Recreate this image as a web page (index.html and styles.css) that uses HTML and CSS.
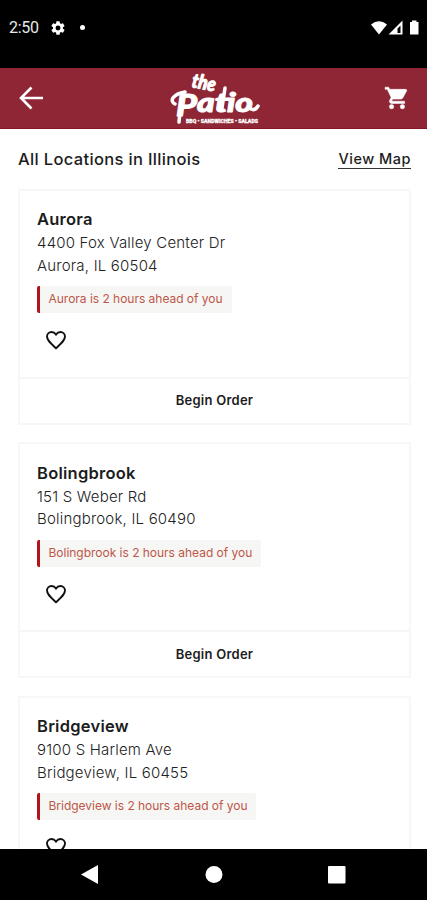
FILE: index.html
```html
<!DOCTYPE html>
<html lang="en">
<head>
<meta charset="utf-8">
<title>The Patio - Locations</title>
<link rel="stylesheet" href="styles.css">
</head>
<body>
<div class="status">
  <span class="clock">2:50</span>
  <svg class="gear" width="16" height="16" viewBox="0 0 24 24"><path fill="#fff" fill-rule="evenodd" d="M19.4 13a7.500 7.500 0 0 0 0-2l2.100-1.650a.5.5 0 0 0 .12-.64l-2-3.460a.5.5 0 0 0-.61-.22l-2.490 1a7.300 7.300 0 0 0-1.690-.98l-.38-2.650A.5.5 0 0 0 14 2h-4a.5.5 0 0 0-.49.42l-.38 2.650a7.700 7.700 0 0 0-1.690.98l-2.490-1a.5.5 0 0 0-.61.220l-2 3.460a.5.5 0 0 0 .12.640L4.570 11a7.900 7.900 0 0 0 0 2l-2.110 1.650a.5.5 0 0 0-.12.640l2 3.460c.12.220.39.300.61.220l2.490-1c.52.400 1.080.730 1.690.980l.38 2.650c.03.240.24.420.49.420h4c.25 0 .46-.18.49-.42l.38-2.650a7.700 7.700 0 0 0 1.690-.98l2.490 1c.23.090.49 0 .61-.22l2-3.460a.5.500 0 0 0-.12-.64zM12 8.300a3.700 3.700 0 1 1 0 7.400 3.700 3.700 0 0 1 0-7.400z"/></svg>
  <span class="dot"></span>
  <svg class="signals" width="50" height="16" viewBox="0 0 50 16"><g fill="#fff"><path d="M1 4.500Q9 -2 17 4.500L9 14.500z"/><path fill-rule="evenodd" d="M18.500 14.500L32.500 .5v14zM27.500 8.500v4.500h3V5.500z"/><path d="M40 2h2V.5h4.500V2h2v12.500H40z"/></g></svg>
</div>
<header class="bar">
  <svg class="back" width="26" height="24" viewBox="0 0 26 24"><path d="M26 12H4M14.500 1.500L4 12l10.500 10.500" fill="none" stroke="#fff" stroke-width="2.600"/></svg>
  <svg class="logo" width="96" height="60" viewBox="0 0 96 60">
    <g fill="#fff" stroke="#fff" stroke-linejoin="round">
      <text class="script" transform="translate(24 19) rotate(11)" font-size="20" stroke-width="1" textLength="24" lengthAdjust="spacingAndGlyphs">the</text>
      <text class="script" transform="translate(9 48)" font-size="31" stroke-width="1" textLength="21" lengthAdjust="spacingAndGlyphs">P</text>
      <text class="script" transform="translate(30 44)" font-size="27" stroke-width="1" textLength="56" lengthAdjust="spacingAndGlyphs">atio</text>
      <path d="M8 36C2 33 6 26 18 24M13 44L12 54M58 20L55 40M84 41Q88 43 91 38" fill="none" stroke-width="3.500" stroke-linecap="round"/>
    </g>
    <text class="tag" x="19" y="55" textLength="72" lengthAdjust="spacingAndGlyphs">BBQ • SANDWICHES • SALADS</text>
  </svg>
  <svg class="cart" width="26" height="26" viewBox="0 0 24 24"><path fill="#fff" d="M7 18a2 2 0 1 0 0 4 2 2 0 0 0 0-4zM1 2v2h2l3.600 7.590-1.350 2.450C4.520 15.370 5.480 17 7 17h12v-2H7.420a.25.25 0 0 1-.22-.37L8.100 13h7.450c.75 0 1.410-.41 1.750-1.030l3.580-6.490A1 1 0 0 0 20 4H5.210l-.94-2zm16 16a2 2 0 1 0 0 4 2 2 0 0 0 0-4z"/></svg>
</header>
<main>
  <div class="heading"><h1>All Locations in Illinois</h1><a class="map">View Map</a></div>
  <section class="card">
    <div class="info"><h2>Aurora</h2><p>4400 Fox Valley Center Dr</p><p>Aurora, IL 60504</p>
    <div class="note">Aurora is 2 hours ahead of you</div>
    <svg class="heart" width="24" height="24" viewBox="0 0 24 24"><path d="M12 20.300l-1.200-1.100C6 14.800 3 12.100 3 8.600 3 6 5 4 7.500 4c1.700 0 3.400.9 4.500 2.500C13.100 4.900 14.800 4 16.500 4 19 4 21 6 21 8.600c0 3.500-3 6.200-7.800 10.600z"/></svg></div>
    <div class="order">Begin Order</div>
  </section>
  <section class="card">
    <div class="info"><h2>Bolingbrook</h2><p>151 S Weber Rd</p><p>Bolingbrook, IL 60490</p>
    <div class="note n2">Bolingbrook is 2 hours ahead of you</div>
    <svg class="heart" width="24" height="24" viewBox="0 0 24 24"><path d="M12 20.300l-1.200-1.100C6 14.800 3 12.100 3 8.600 3 6 5 4 7.500 4c1.700 0 3.400.9 4.500 2.500C13.100 4.900 14.800 4 16.500 4 19 4 21 6 21 8.600c0 3.500-3 6.200-7.800 10.600z"/></svg></div>
    <div class="order">Begin Order</div>
  </section>
  <section class="card">
    <div class="info"><h2>Bridgeview</h2><p>9100 S Harlem Ave</p><p>Bridgeview, IL 60455</p>
    <div class="note n3">Bridgeview is 2 hours ahead of you</div>
    <svg class="heart" width="24" height="24" viewBox="0 0 24 24"><path d="M12 20.300l-1.200-1.100C6 14.800 3 12.100 3 8.600 3 6 5 4 7.500 4c1.700 0 3.400.9 4.500 2.500C13.100 4.900 14.800 4 16.500 4 19 4 21 6 21 8.600c0 3.500-3 6.200-7.800 10.600z"/></svg></div>
  </section>
</main>
<nav><svg width="427" height="51" viewBox="0 0 427 51"><g fill="#fff"><path d="M81 25.500L98 16v19z"/><circle cx="214" cy="25.500" r="8.500"/><rect x="328" y="17" width="17.500" height="17.500" rx="1"/></g></svg></nav>
</body>
</html>
```
FILE: styles.css
```css
* { box-sizing: border-box; }
body {
  margin: 0;
  height: 900px;
  overflow: hidden;
  display: flex;
  flex-direction: column;
  background: #fff;
  color: #1c1c1c;
  font-family: Inter, sans-serif;
}
h1, h2, p { margin: 0; }
svg { display: block; flex: none; overflow: visible; }
.status {
  height: 68px;
  flex: none;
  background: #000;
  color: #e8e8e8;
  display: flex;
  align-items: center;
  padding: 0 7px 13px 9px;
}
.clock { font: 400 16px Roboto, sans-serif; width: 41px; letter-spacing: -0.3px; }
.dot { width: 5px; height: 5px; border-radius: 50%; background: #fff; margin-left: 14px; }
.signals { margin-left: auto; }
.bar {
  height: 61px;
  flex: none;
  background: #8e2636;
  border-bottom: 1px solid #841525;
  display: flex;
  align-items: center;
  justify-content: space-between;
  padding: 0 17px;
}
.logo { margin-left: 3px; }
.cart path { stroke: #fff; stroke-width: 0.5px; }
.script { font-family: Lato, sans-serif; font-weight: 900; font-style: italic; }
.tag { font: 900 6px Roboto, sans-serif; fill: #fff; stroke: #fff; stroke-width: 0.3px; }
main { flex: 1; min-height: 0; overflow: hidden; padding: 0 16px 0 18px; }
.heading {
  height: 59.600px;
  display: flex;
  justify-content: space-between;
  align-items: center;
}
h1 { font-size: 16.500px; font-weight: 500; line-height: 20px; letter-spacing: 0.34px; margin-top: -0.600px; }
.map { font-size: 14.500px; font-weight: 500; line-height: 18px; letter-spacing: 0.5px; border-bottom: 1px solid #333; margin-top: 1px; }
.card {
  height: 236px;
  margin-bottom: 17.500px;
  border: 2px solid #f7f7f7;
  display: flex;
  flex-direction: column;
}
.info { height: 188px; padding: 16.900px 17px 0; flex: none; border-bottom: 2px solid #f5f5f5; }
h2 { font-size: 16.500px; font-weight: 600; line-height: 24px; letter-spacing: 0.25px; margin-bottom: 1px; }
p { font-size: 15px; font-weight: 300; line-height: 22.500px; letter-spacing: 0.2px; color: #222; }
.note {
  width: 195px;
  height: 27px;
  margin-top: 8.900px;
  padding-left: 8.500px;
  line-height: 26px;
  border-left: 3px solid #b3141c;
  border-radius: 2px;
  background: #f6f6f5;
  color: #bd5648;
  font-size: 12px;
  letter-spacing: -0.02px;
  white-space: nowrap;
}
.n2 { width: 224px; }
.n3 { width: 219px; }
.heart { margin: 15px 0 0 7px; }
.heart path { fill: none; stroke: #111; stroke-width: 1.900; }
.order {
  flex: 1;
  display: flex;
  align-items: center;
  justify-content: center;
  padding-bottom: 1px;
  font-size: 13px;
  font-weight: 600;
  letter-spacing: 0.25px;
}
nav { height: 51px; flex: none; background: #000; }
```
